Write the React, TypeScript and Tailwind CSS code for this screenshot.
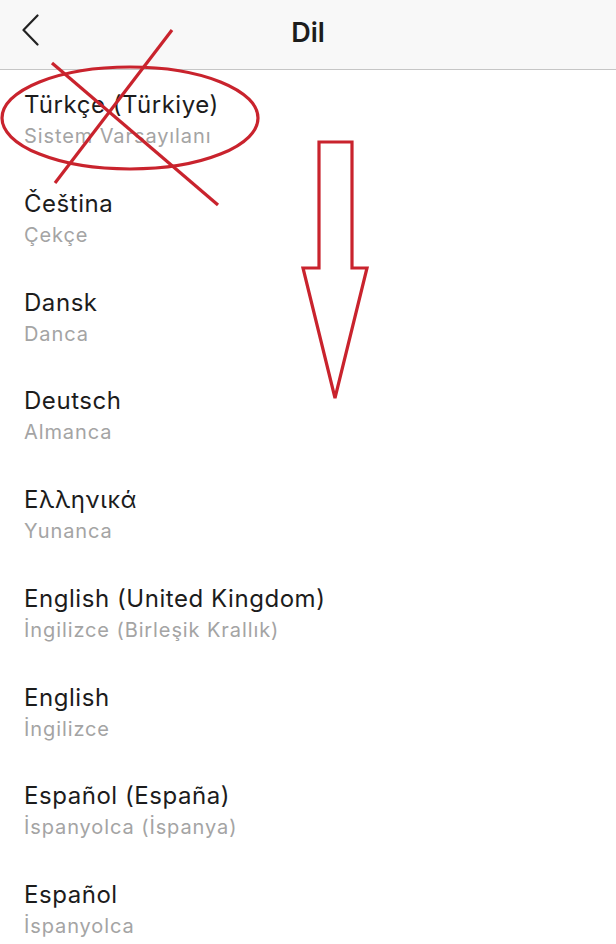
import React from "react";

const langs = [
  { name: "Türkçe (Türkiye)", sub: "Sistem Varsayılanı" },
  { name: "Čeština", sub: "Çekçe" },
  { name: "Dansk", sub: "Danca" },
  { name: "Deutsch", sub: "Almanca" },
  { name: "Ελληνικά", sub: "Yunanca" },
  { name: "English (United Kingdom)", sub: "İngilizce (Birleşik Krallık)" },
  { name: "English", sub: "İngilizce" },
  { name: "Español (España)", sub: "İspanyolca (İspanya)" },
  { name: "Español", sub: "İspanyolca" },
];

export default function App() {
  return (
    <div
      className="relative w-[616px] h-[944px] overflow-hidden bg-white"
      style={{ fontFamily: 'Inter, "Liberation Sans", sans-serif' }}
    >
      {/* nav bar */}
      <div className="relative h-[70px] bg-[#f8f8f8] border-b border-[#c6c6c6] flex items-center justify-center">
        <svg className="absolute left-[20px] top-[14px]" width="22" height="32" viewBox="0 0 22 32">
          <path d="M17.5 1.5 L3.5 16 L17.5 30.5" fill="none" stroke="#222" strokeWidth="2.2" strokeLinecap="round" strokeLinejoin="round" />
        </svg>
        <div className="text-[27px] font-semibold text-[#1c1c1c] -mt-[2px]">Dil</div>
      </div>

      {/* language list */}
      <div className="flex flex-col">
        {langs.map((l) => (
          <div key={l.name} className="h-[98.75px] pt-[20px] px-[24px] shrink-0">
            <div className="text-[24px] leading-[30px] tracking-[0.55px] text-[#1c1c1c]">{l.name}</div>
            <div className="text-[20px] leading-[32px] tracking-[0.9px] text-[#a4a4a4]">{l.sub}</div>
          </div>
        ))}
      </div>

      {/* red annotations */}
      <svg className="absolute inset-0 pointer-events-none" width="616" height="944" viewBox="0 0 616 944">
        <g fill="none" stroke="#c9232d" strokeWidth="3.2" strokeLinejoin="miter">
          <ellipse cx="130" cy="118" rx="128" ry="51" />
          <line x1="52" y1="63" x2="218" y2="205" />
          <line x1="172" y1="30" x2="55" y2="183" />
          <polygon points="319,142 352,142 352,268 367,268 335,398 303,268 319,268" />
        </g>
      </svg>
    </div>
  );
}
